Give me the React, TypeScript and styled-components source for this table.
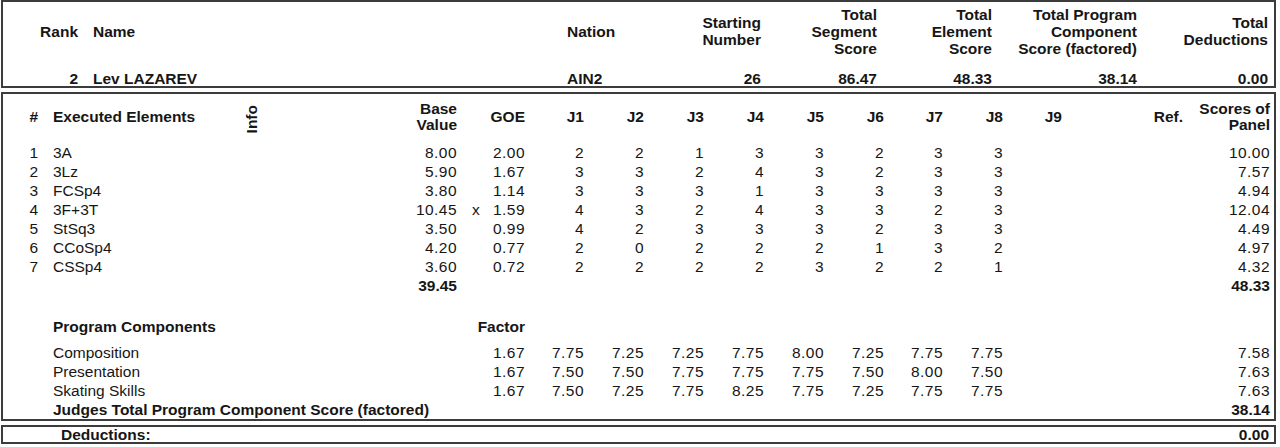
import React from "react";
import styled, { createGlobalStyle } from "styled-components";

const GlobalStyle = createGlobalStyle`
  html, body {
    margin: 0;
    padding: 0;
    background: #ffffff;
  }
  body {
    font-family: "Liberation Sans", Arial, sans-serif;
    color: #161616;
    font-size: 15.5px;
  }
`;

const Page = styled.div`
  display: flex;
  flex-direction: column;
  gap: 4px;
  padding-left: 1px;
  width: 1275px;
`;

const Box = styled.section`
  box-sizing: border-box;
  width: 1275px;
  border: 2px solid #3c3c3c;
  padding-right: 4px;
`;

const SummaryGrid = styled.div`
  display: grid;
  grid-template-columns: 76px 488px 113px 82px 116px 115px 145px 131px;
  grid-template-rows: 56px 28px;
  align-items: center;
  font-weight: bold;
  line-height: 17px;
`;

const SumCell = styled.div<{ $align?: "left" | "right"; $indent?: number; $bottom?: boolean }>`
  text-align: ${(p) => p.$align ?? "right"};
  padding-left: ${(p) => p.$indent ?? 0}px;
  padding-right: ${(p) => (p.$align === "left" ? 0 : 1)}px;
  padding-top: ${(p) => (p.$bottom ? 0 : 2)}px;
  white-space: nowrap;
  align-self: ${(p) => (p.$bottom ? "end" : "center")};
  line-height: ${(p) => (p.$bottom ? "15px" : "17px")};
`;

const MainGrid = styled.div<{ $height: number; $top?: number }>`
  display: grid;
  grid-template-columns: 36px 201px 24px 193px 33px 35px 59px 60px 60px 60px 60px 60px 59px 60px 59px 121px 87px;
  height: ${(p) => p.$height}px;
  margin-top: ${(p) => p.$top ?? 0}px;
  align-items: center;
  line-height: 16px;
`;

const HeadCell = styled.div<{ $align?: "left" | "right" | "center"; $col?: string; $indent?: number }>`
  font-weight: bold;
  white-space: nowrap;
  text-align: ${(p) => p.$align ?? "right"};
  grid-column: ${(p) => p.$col ?? "auto"};
  padding-left: ${(p) => p.$indent ?? 0}px;
`;

const NumHeadCell = styled(HeadCell)`
  padding-right: 1px;
`;

const InfoLabel = styled.div`
  font-weight: bold;
  writing-mode: vertical-rl;
  transform: rotate(180deg);
  justify-self: center;
  margin-top: 4px;
  line-height: 14px;
`;

const Label = styled.div<{ $col?: string; $bold?: boolean }>`
  grid-column: ${(p) => p.$col ?? "auto"};
  padding-left: 14px;
  white-space: nowrap;
  font-weight: ${(p) => (p.$bold ? "bold" : "normal")};
`;

const Num = styled.div<{ $bold?: boolean; $col?: string }>`
  text-align: right;
  white-space: nowrap;
  grid-column: ${(p) => p.$col ?? "auto"};
  font-weight: ${(p) => (p.$bold ? "bold" : "normal")};
  letter-spacing: ${(p) => (p.$bold ? "0" : "0.45px")};
`;

const IndexNum = styled.div`
  text-align: right;
  padding-right: 1px;
`;

const Mark = styled.div`
  padding-left: 15px;
`;

const DeductionRow = styled.div`
  display: flex;
  justify-content: space-between;
  align-items: center;
  height: 15px;
  line-height: 16px;
  padding-top: 1px;
  box-sizing: border-box;
  font-weight: bold;
  padding-left: 58px;
  padding-right: 1px;
`;

type Element = {
  name: string;
  base: string;
  mark?: string;
  goe: string;
  judges: number[];
  panel: string;
};

const elements: Element[] = [
  { name: "3A", base: "8.00", goe: "2.00", judges: [2, 2, 1, 3, 3, 2, 3, 3], panel: "10.00" },
  { name: "3Lz", base: "5.90", goe: "1.67", judges: [3, 3, 2, 4, 3, 2, 3, 3], panel: "7.57" },
  { name: "FCSp4", base: "3.80", goe: "1.14", judges: [3, 3, 3, 1, 3, 3, 3, 3], panel: "4.94" },
  { name: "3F+3T", base: "10.45", mark: "x", goe: "1.59", judges: [4, 3, 2, 4, 3, 3, 2, 3], panel: "12.04" },
  { name: "StSq3", base: "3.50", goe: "0.99", judges: [4, 2, 3, 3, 3, 2, 3, 3], panel: "4.49" },
  { name: "CCoSp4", base: "4.20", goe: "0.77", judges: [2, 0, 2, 2, 2, 1, 3, 2], panel: "4.97" },
  { name: "CSSp4", base: "3.60", goe: "0.72", judges: [2, 2, 2, 2, 3, 2, 2, 1], panel: "4.32" },
];

const components = [
  { name: "Composition", factor: "1.67", judges: ["7.75", "7.25", "7.25", "7.75", "8.00", "7.25", "7.75", "7.75"], panel: "7.58" },
  { name: "Presentation", factor: "1.67", judges: ["7.50", "7.50", "7.75", "7.75", "7.75", "7.50", "8.00", "7.50"], panel: "7.63" },
  { name: "Skating Skills", factor: "1.67", judges: ["7.50", "7.25", "7.75", "8.25", "7.75", "7.25", "7.75", "7.75"], panel: "7.63" },
];

const judgeLabels = ["J1", "J2", "J3", "J4", "J5", "J6", "J7", "J8", "J9"];

export default function App() {
  return (
    <>
      <GlobalStyle />
      <Page>
        <Box>
          <SummaryGrid>
            <SumCell>Rank</SumCell>
            <SumCell $align="left" $indent={14}>Name</SumCell>
            <SumCell $align="left">Nation</SumCell>
            <SumCell>
              Starting
              <br />
              Number
            </SumCell>
            <SumCell>
              Total
              <br />
              Segment
              <br />
              Score
            </SumCell>
            <SumCell>
              Total
              <br />
              Element
              <br />
              Score
            </SumCell>
            <SumCell>
              Total Program
              <br />
              Component
              <br />
              Score (factored)
            </SumCell>
            <SumCell>
              Total
              <br />
              Deductions
            </SumCell>

            <SumCell $bottom>2</SumCell>
            <SumCell $bottom $align="left" $indent={14}>Lev LAZAREV</SumCell>
            <SumCell $bottom $align="left">AIN2</SumCell>
            <SumCell $bottom>26</SumCell>
            <SumCell $bottom>86.47</SumCell>
            <SumCell $bottom>48.33</SumCell>
            <SumCell $bottom>38.14</SumCell>
            <SumCell $bottom>0.00</SumCell>
          </SummaryGrid>
        </Box>

        <Box>
          <MainGrid $height={42} $top={2}>
            <NumHeadCell>#</NumHeadCell>
            <HeadCell $align="left" $indent={14}>Executed Elements</HeadCell>
            <InfoLabel>Info</InfoLabel>
            <HeadCell>
              Base
              <br />
              Value
            </HeadCell>
            <HeadCell $col="6">GOE</HeadCell>
            {judgeLabels.map((j) => (
              <HeadCell key={j}>{j}</HeadCell>
            ))}
            <HeadCell>Ref.</HeadCell>
            <HeadCell>
              Scores of
              <br />
              Panel
            </HeadCell>
          </MainGrid>

          {elements.map((el, i) => (
            <MainGrid key={el.name} $height={19} $top={i === 0 ? 5 : 0}>
              <IndexNum>{i + 1}</IndexNum>
              <Label $col="2 / 4">{el.name}</Label>
              <Num $col="4">{el.base}</Num>
              <Mark>{el.mark ?? ""}</Mark>
              <Num>{el.goe}</Num>
              {el.judges.map((s, k) => (
                <Num key={k}>{s}</Num>
              ))}
              <Num $col="17">{el.panel}</Num>
            </MainGrid>
          ))}
          <MainGrid $height={19}>
            <Num $bold $col="4">39.45</Num>
            <Num $bold $col="17">48.33</Num>
          </MainGrid>

          <MainGrid $height={19} $top={22}>
            <Label $bold $col="2 / 5">Program Components</Label>
            <HeadCell $col="5 / 7">Factor</HeadCell>
          </MainGrid>
          {components.map((c, i) => (
            <MainGrid key={c.name} $height={19} $top={i === 0 ? 7 : 0}>
              <Label $col="2 / 5">{c.name}</Label>
              <Num $col="5 / 7">{c.factor}</Num>
              {c.judges.map((s, k) => (
                <Num key={k}>{s}</Num>
              ))}
              <Num $col="17">{c.panel}</Num>
            </MainGrid>
          ))}
          <MainGrid $height={19}>
            <Label $bold $col="2 / 6">Judges Total Program Component Score (factored)</Label>
            <Num $bold $col="17">38.14</Num>
          </MainGrid>
        </Box>

        <Box>
          <DeductionRow>
            <span>Deductions:</span>
            <span>0.00</span>
          </DeductionRow>
        </Box>
      </Page>
    </>
  );
}
